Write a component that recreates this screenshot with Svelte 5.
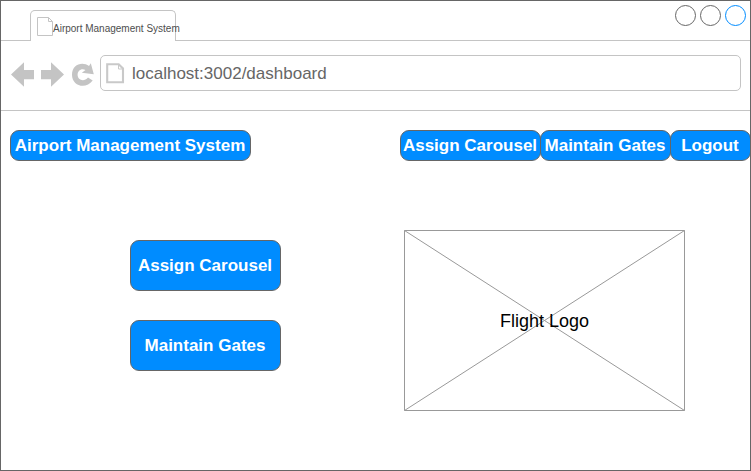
<script>
  const title = 'Airport Management System';
  const links = [
    { label: 'Assign Carousel', width: 141 },
    { label: 'Maintain Gates', width: 131 },
    { label: 'Logout', width: 81 }
  ];
  const actions = ['Assign Carousel', 'Maintain Gates'];
</script>

<div class="window">
  <header class="tabs">
    <div class="lead"></div>
    <div class="tab">
      <svg width="17" height="20" viewBox="0 0 17 20" fill="none" stroke="#c4c4c4">
        <path d="M.5 .5H11.5L15.5 4.5V18.5H.5ZM11.5 .5V4.5H15.5" />
      </svg>
      <span>{title}</span>
    </div>
    <div class="controls">
      <i></i><i></i><i class="active"></i>
    </div>
  </header>

  <div class="toolbar">
    <svg class="nav-icons" width="90" height="30" viewBox="10 60 90 30">
      <g fill="#c4c4c4">
        <path d="M11 74.5L24 62.3V70H34V79.3H24V86.8Z" />
        <path d="M64 74.5L51 62.3V70H41V79.3H51V86.8Z" />
        <path d="M90.8 63.2L93.8 74.3L81.8 72.8L85.5 70C81.5 67.7 77.6 70.5 77.6 74.7C77.6 80 84 82.4 88 77.4L92.7 80.5C86 89.8 72 86.3 72 74.7C72 64.3 82.5 61 89 66.1Z" />
      </g>
    </svg>
    <div class="address">
      <svg width="19" height="21" viewBox="0 0 19 21" fill="none" stroke="#c9c9c9">
        <path d="M1.2 1.2H12.7L17 5.5V19.2H1.2Z" stroke-width="2.1" />
        <path d="M12.5 2V6H17" stroke-width="1" />
      </svg>
      <span>localhost:3002/dashboard</span>
    </div>
  </div>

  <nav>
    <button class="brand">{title}</button>
    <div class="links">
      {#each links as link}
        <button style:width="{link.width}px">{link.label}</button>
      {/each}
    </div>
  </nav>

  <main>
    <div class="actions">
      {#each actions as action}
        <button>{action}</button>
      {/each}
    </div>
    <div class="logo">
      <svg width="281" height="181" viewBox="0 0 281 181" fill="none" stroke="#999">
        <path d="M.5 .5H280.5V180.5H.5ZM.5 .5L280.5 180.5M280.5 .5L.5 180.5" />
      </svg>
      <span>Flight Logo</span>
    </div>
  </main>
</div>

<style>
  .window {
    box-sizing: border-box;
    width: 751px;
    height: 471px;
    border: 1px solid #666;
    background: #fff;
    overflow: hidden;
    font: 17px/20px 'Liberation Sans', Arial, sans-serif;
    white-space: nowrap;
  }
  svg {
    display: block;
    flex: none;
  }
  .tabs {
    display: flex;
    height: 40px;
  }
  .lead {
    box-sizing: border-box;
    width: 29px;
    border-bottom: 1px solid #c4c4c4;
  }
  .tab {
    box-sizing: border-box;
    display: flex;
    width: 146px;
    height: 31px;
    margin-top: 9px;
    padding: 6px 0 0 6px;
    border: 1px solid #c4c4c4;
    border-bottom: 0;
    border-radius: 5px 5px 0 0;
    color: #4d4d4d;
    font-size: 10px;
    line-height: 12px;
  }
  .tab span {
    margin: 6px 0 0 -1px;
  }
  .controls {
    box-sizing: border-box;
    flex: 1;
    display: flex;
    justify-content: flex-end;
    gap: 4px;
    padding: 4px 4px 0 0;
    border-bottom: 1px solid #c4c4c4;
  }
  .controls i {
    box-sizing: border-box;
    width: 21px;
    height: 21px;
    border: 1px solid #666;
    border-radius: 50%;
  }
  .controls .active {
    border-color: #008cff;
  }
  .toolbar {
    box-sizing: border-box;
    display: flex;
    height: 70px;
    padding: 14px 9px 0;
    border-bottom: 1px solid #c4c4c4;
  }
  .nav-icons {
    margin-top: 5px;
  }
  .address {
    box-sizing: border-box;
    display: flex;
    align-items: center;
    width: 641px;
    height: 36px;
    padding-left: 5px;
    border: 1px solid #c4c4c4;
    border-radius: 5px;
    color: #666;
  }
  .address span {
    margin-left: 7px;
    padding-top: 2px;
  }
  nav {
    display: flex;
    justify-content: space-between;
    padding: 19px 0 0 9px;
  }
  .links {
    display: flex;
    margin-right: -1px;
  }
  button {
    box-sizing: border-box;
    height: 31px;
    margin: 0;
    padding: 0 1px 0 0;
    border: 1px solid #666;
    border-radius: 9px;
    background: #008cff;
    color: #fff;
    font: bold 17px/20px 'Liberation Sans', Arial, sans-serif;
  }
  .links button + button {
    margin-left: -1px;
  }
  .brand {
    width: 241px;
  }
  main {
    display: flex;
    align-items: flex-start;
    gap: 123px;
    padding: 69px 0 0 129px;
  }
  .actions {
    display: flex;
    flex-direction: column;
    gap: 29px;
    padding-top: 10px;
  }
  .actions button {
    width: 151px;
    height: 51px;
  }
  .logo {
    display: grid;
    place-items: center;
    width: 281px;
    height: 181px;
    color: #000;
    font-size: 18px;
  }
  .logo svg,
  .logo span {
    grid-area: 1 / 1;
  }
</style>
